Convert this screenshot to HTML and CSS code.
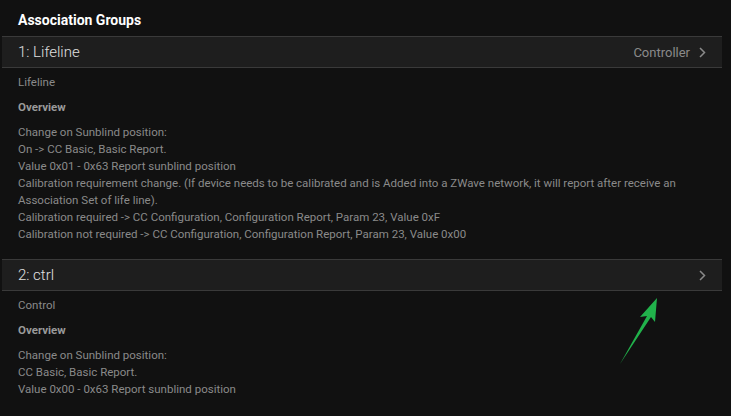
FILE: index.html
```html
<!DOCTYPE html>
<html>
<head>
<meta charset="utf-8">
<link rel="stylesheet" href="styles.css">
</head>
<body>
<div class="page">
  <h1 class="title">Association Groups</h1>
  <section class="group">
    <div class="group-head">
      <span class="group-name">1: Lifeline</span>
      <span class="group-meta">Controller
        <svg class="chev" width="7" height="11" viewBox="0 0 7 11"><path d="M1 1 L5.5 5.5 L1 10" fill="none" stroke="#8a8a8a" stroke-width="1.5"/></svg>
      </span>
    </div>
    <div class="group-body">
      <p class="label">Lifeline</p>
      <p class="overview">Overview</p>
      <p class="text">Change on Sunblind position:<br>On -&gt; CC Basic, Basic Report.<br>Value 0x01 - 0x63 Report sunblind position<br>Calibration requirement change. (If device needs to be calibrated and is Added into a ZWave network, it will report after receive an Association Set of life line).<br>Calibration required -&gt; CC Configuration, Configuration Report, Param 23, Value 0xF<br>Calibration not required -&gt; CC Configuration, Configuration Report, Param 23, Value 0x00</p>
    </div>
  </section>
  <section class="group">
    <div class="group-head">
      <span class="group-name">2: ctrl</span>
      <span class="group-meta">
        <svg class="chev" width="7" height="11" viewBox="0 0 7 11"><path d="M1 1 L5.5 5.5 L1 10" fill="none" stroke="#8a8a8a" stroke-width="1.5"/></svg>
      </span>
    </div>
    <div class="group-body">
      <p class="label">Control</p>
      <p class="overview">Overview</p>
      <p class="text">Change on Sunblind position:<br>CC Basic, Basic Report.<br>Value 0x00 - 0x63 Report sunblind position</p>
    </div>
  </section>
  <svg class="arrow" width="60" height="80" viewBox="0 0 60 80"><path d="M2 68 L29 20 L22 21 L39 2 L37 26 L33 21 Z" fill="#21b24b"/></svg>
</div>
</body>
</html>
```
FILE: styles.css
```css
html, body {
  margin: 0;
  padding: 0;
  background: #111111;
}
body {
  font-family: Roboto, "Noto Sans", sans-serif;
  color: #8c8c8c;
  width: 731px;
  height: 416px;
  overflow: hidden;
}
.page {
  position: relative;
  padding: 0 9px 0 2px;
}
.title {
  margin: 0;
  height: 36px;
  padding-left: 16px;
  font-size: 14px;
  font-weight: 700;
  color: #ffffff;
  line-height: 40px;
}
.group-head {
  display: flex;
  align-items: center;
  justify-content: space-between;
  height: 30px;
  background: #1e1e1e;
  border-top: 1px solid #3a3a3a;
  border-bottom: 1px solid #3a3a3a;
  padding: 0 16px;
}
.group-name {
  font-size: 15px;
  font-weight: 300;
  color: #e0e0e0;
}
.group-meta {
  display: flex;
  align-items: center;
  gap: 9px;
  font-size: 13px;
  color: #8a8a8a;
}
.chev {
  display: block;
}
.group-body {
  padding: 6px 16px 16px;
}
.group-body p {
  margin: 0;
  font-size: 11.5px;
  line-height: 17px;
}
.label {
  color: #8a8a8a;
}
.overview {
  margin-top: 8px !important;
  font-weight: 700;
  color: #9a9a9a;
}
.text {
  margin-top: 8px !important;
  color: #8a8a8a;
}
.arrow {
  position: absolute;
  left: 618px;
  top: 296px;
}
```
